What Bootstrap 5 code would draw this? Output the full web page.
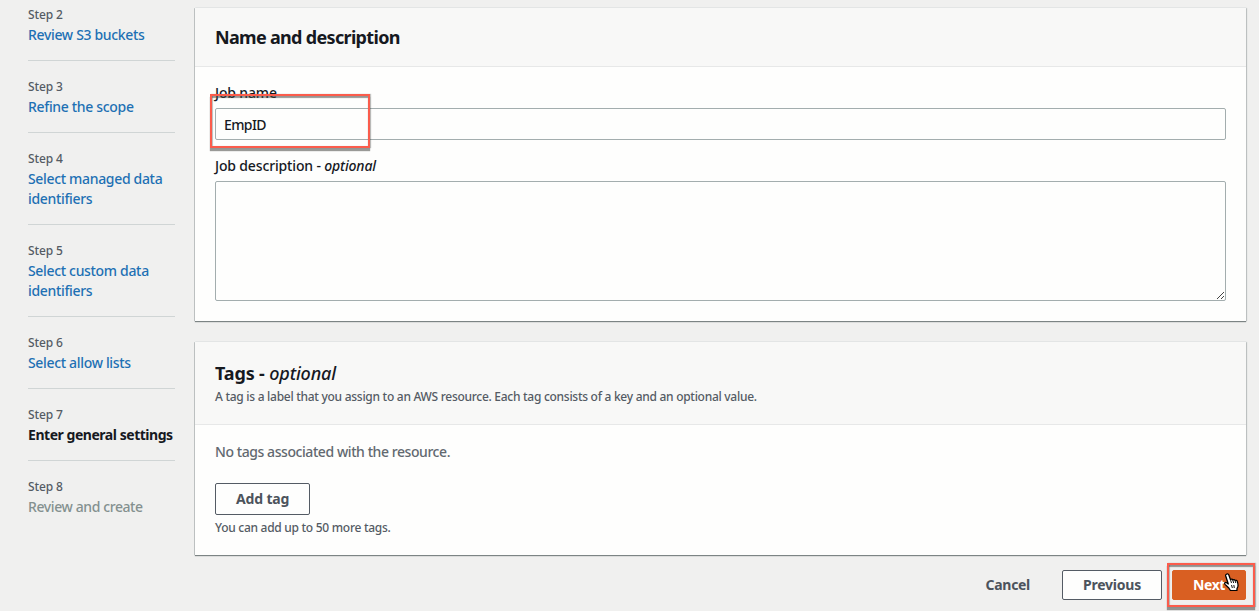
<!DOCTYPE html>
<html lang="en">
<head>
    <meta charset="utf-8">
    <title>Create job - Enter general settings</title>
    <link href="https://cdn.jsdelivr.net/npm/bootstrap@5.3.0/dist/css/bootstrap.min.css" rel="stylesheet">
    <style>
        body {
            background-color: #f0f0ef;
            color: #16191f;
            font-family: "Noto Sans", sans-serif;
            font-size: 14px;
            line-height: 20px;
            letter-spacing: -0.28px;
            height: 611px;
            overflow: hidden;
        }

        /* Wizard steps */
        .wizard-steps {
            width: 195px;
            padding: 5px 20px 0 28px;
        }

        .wizard-steps li {
            padding-bottom: 15px;
            margin-bottom: 16px;
            border-bottom: 1px solid #d0d5d5;
        }

        .wizard-steps li:last-child {
            border-bottom: 0;
        }

        .step-label {
            color: #545b64;
            font-size: 12px;
            font-weight: 500;
            letter-spacing: -0.15px;
        }

        .wizard-steps a {
            color: #1e70b4;
            font-weight: 500;
            letter-spacing: -0.33px;
        }

        .step-current {
            font-weight: 700;
            letter-spacing: -0.46px;
            white-space: nowrap;
        }

        .step-disabled {
            color: #84908f;
            font-weight: 500;
            letter-spacing: -0.4px;
        }

        /* Panels */
        .wizard-main {
            padding: 8px 13px 0 0;
        }

        .panel {
            border: 0;
            border-radius: 0;
            background-color: #fefefd;
            color: inherit;
            margin-bottom: 21px;
            box-shadow: 0 1px 1px #7c8484, -1px 0 0 #c9cdcd, 1px 0 1px #c9cdcd, 0 -1px 0 #e8eaea;
        }

        .panel .card-header {
            background-color: #f8f8f7;
            border-bottom: 1px solid #e7e8e8;
            border-radius: 0;
            padding: 18px 20px;
        }

        .panel .card-body {
            padding: 16px 20px 20px;
        }

        .panel h2 {
            font-size: 18px;
            line-height: 22px;
            font-weight: 700;
            letter-spacing: -0.68px;
            margin: 0;
        }

        .panel h2 em {
            font-weight: 500;
        }

        .hint {
            font-size: 12px;
            font-weight: 500;
            height: 20px;
            line-height: 21px;
            color: #545b64;
        }

        .tags-panel {
            margin-bottom: 15px;
        }

        .tags-panel .card-header {
            padding-top: 20px;
        }

        .tags-panel .card-body {
            padding: 17px 20px 18px;
        }

        .tags-panel h2 {
            letter-spacing: -0.15px;
            margin-bottom: 2px;
        }

        .no-tags {
            color: #626970;
            font-weight: 500;
            letter-spacing: -0.43px;
            margin-bottom: 21px;
        }

        /* Form */
        .field-label {
            display: block;
            font-weight: 500;
            letter-spacing: -0.15px;
            margin-bottom: 5px;
        }

        .form-control {
            border: 1px solid #a3adae;
            border-radius: 2px;
            background-color: #fefefd;
            color: #16191f;
            font-size: 14px;
            line-height: 20px;
            letter-spacing: -0.6px;
            font-weight: 500;
            padding: 5px 8px;
        }

        input.form-control {
            height: 32px;
        }

        textarea.form-control {
            display: block;
            height: 120px;
            resize: none;
        }

        .grip {
            right: 1px;
            bottom: 1px;
        }

        /* Buttons */
        .btn {
            --bs-btn-border-radius: 2px;
            --bs-btn-font-size: 14px;
            --bs-btn-font-weight: 700;
            --bs-btn-line-height: 20px;
            --bs-btn-padding-x: 20px;
            --bs-btn-padding-y: 4px;
            letter-spacing: -0.15px;
            display: block;
        }

        .btn-plain {
            --bs-btn-color: #4c535c;
            --bs-btn-border-color: #545b64;
            --bs-btn-bg: #fefefd;
        }

        .btn-add {
            --bs-btn-padding-y: 5px;
            margin-bottom: 2px;
        }

        .btn-cancel {
            --bs-btn-color: #4c535c;
            letter-spacing: -0.3px;
            margin-right: 1px;
        }

        .btn-previous {
            letter-spacing: -0.23px;
        }

        .btn-next {
            --bs-btn-color: #fff;
            --bs-btn-bg: #d95f22;
            --bs-btn-border-color: #d95f22;
            letter-spacing: -0.4px;
        }

        .wizard-actions {
            gap: 10px;
        }

        /* Highlight frames over the fields to use */
        .marker {
            border: 2px solid #fb5c4c;
            box-shadow: 0 3px 1px rgba(70, 70, 65, .55), inset 0 2px 1px rgba(70, 70, 65, .55), inset 1px 0 1px rgba(70, 70, 65, .3), 1px 0 1px rgba(70, 70, 65, .3);
            pointer-events: none;
            z-index: 2;
        }

        .marker-name {
            left: -5px;
            top: -14px;
            width: 160px;
            height: 54px;
        }

        .marker-next {
            left: -5px;
            top: -7px;
            width: 88px;
            height: 44px;
        }

        .pointer {
            left: 52px;
            top: 3px;
            z-index: 3;
        }
    </style>
</head>
<body>
<div class="d-flex">
    <nav class="wizard-steps flex-shrink-0">
        <ul class="list-unstyled mb-0">
            <li>
                <div class="step-label">Step 2</div>
                <a href="#" class="text-decoration-none">Review S3 buckets</a>
            </li>
            <li>
                <div class="step-label">Step 3</div>
                <a href="#" class="text-decoration-none">Refine the scope</a>
            </li>
            <li>
                <div class="step-label">Step 4</div>
                <a href="#" class="text-decoration-none">Select managed data identifiers</a>
            </li>
            <li>
                <div class="step-label">Step 5</div>
                <a href="#" class="text-decoration-none">Select custom data identifiers</a>
            </li>
            <li>
                <div class="step-label">Step 6</div>
                <a href="#" class="text-decoration-none">Select allow lists</a>
            </li>
            <li>
                <div class="step-label">Step 7</div>
                <div class="step-current">Enter general settings</div>
            </li>
            <li>
                <div class="step-label">Step 8</div>
                <div class="step-disabled">Review and create</div>
            </li>
        </ul>
    </nav>

    <main class="wizard-main flex-grow-1">
        <section class="card panel">
            <div class="card-header">
                <h2>Name and description</h2>
            </div>
            <div class="card-body">
                <label class="field-label" for="jobName">Job name</label>
                <div class="position-relative mb-3">
                    <input type="text" class="form-control" id="jobName" value="EmpID">
                    <div class="marker marker-name position-absolute"></div>
                </div>
                <label class="field-label" for="jobDescription">Job description - <em>optional</em></label>
                <div class="position-relative">
                    <textarea class="form-control" id="jobDescription"></textarea>
                    <svg class="grip position-absolute" width="9" height="9" viewBox="0 0 9 9" stroke="#444" fill="none">
                        <path d="M1 8L8 1M5 8L8 5"/>
                    </svg>
                </div>
            </div>
        </section>

        <section class="card panel tags-panel">
            <div class="card-header">
                <h2>Tags - <em>optional</em></h2>
                <div class="hint">A tag is a label that you assign to an AWS resource. Each tag consists of a key and an optional value.</div>
            </div>
            <div class="card-body">
                <div class="no-tags">No tags associated with the resource.</div>
                <button type="button" class="btn btn-plain btn-add">Add tag</button>
                <div class="hint">You can add up to 50 more tags.</div>
            </div>
        </section>

        <div class="d-flex justify-content-end wizard-actions">
            <button type="button" class="btn btn-cancel">Cancel</button>
            <button type="button" class="btn btn-plain btn-previous">Previous</button>
            <div class="position-relative">
                <button type="button" class="btn btn-next">Next</button>
                <div class="marker marker-next position-absolute"></div>
                <!-- hand pointer -->
                <svg class="pointer position-absolute" width="15" height="19" viewBox="0 0 14 19" preserveAspectRatio="none">
                    <path d="M2.2 1.2C3.3.5 4.2 1 4.6 2.2L6 6.5c.8-.6 1.8-.4 2.2.4.8-.6 1.8-.3 2.1.5.9-.4 1.8 0 2.1 1 .6 2 1 3.6.5 5.3l-.8 2v1.8H6L4.500 15 1 11.3C0 10 1.2 8.8 2.5 9.8L4 11 1.6 3C1.4 2.2 1.5 1.6 2.2 1.2z" fill="#fff" stroke="#000" stroke-width="1.2" stroke-linejoin="round"/>
                    <path d="M6 6.5L7 10M8.2 7L9 10M10.3 7.5L11 10M7 12l.8 3M9.2 12l.4 3" fill="none" stroke="#000" stroke-width=".9"/>
                </svg>
            </div>
        </div>
    </main>
</div>

<script src="https://cdn.jsdelivr.net/npm/bootstrap@5.3.0/dist/js/bootstrap.bundle.min.js"></script>
</body>
</html>
